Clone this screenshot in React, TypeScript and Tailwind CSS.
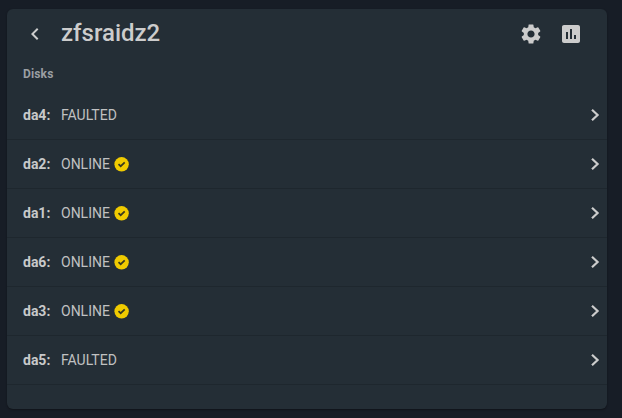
import React from 'react';
import { MdAssessment, MdChevronLeft, MdSettings } from 'react-icons/md';

interface Disk {
  name: string;
  status: 'ONLINE' | 'FAULTED';
}

const disks: Disk[] = [
  { name: 'da4', status: 'FAULTED' },
  { name: 'da2', status: 'ONLINE' },
  { name: 'da1', status: 'ONLINE' },
  { name: 'da6', status: 'ONLINE' },
  { name: 'da3', status: 'ONLINE' },
  { name: 'da5', status: 'FAULTED' },
];

function HealthyIcon() {
  return (
    <svg className="ml-1 h-[15px] w-[15px] text-[#f0cb00]" viewBox="0 0 15 15" fill="none">
      <circle cx="7.6" cy="7.3" r="7.2" fill="currentColor" />
      <path d="M4.5 7.1l2.2 2.1 4-3.9" stroke="#37391f" strokeWidth="1.7" />
    </svg>
  );
}

function ChevronIcon() {
  return (
    <svg className="h-6 w-6" viewBox="0 0 24 24" fill="none" stroke="currentColor">
      <path d="M9 6.7L14.6 12 9 17.3" strokeWidth="2.2" />
    </svg>
  );
}

function DiskRow({ disk }: { disk: Disk }) {
  return (
    <li className="flex h-[49px] items-center border-b border-[#1e272e] pl-4 text-sm">
      <span className="w-[38px] font-bold text-[#c8c9ca]">{disk.name}:</span>
      <span className="text-[#c0c1c2]">{disk.status}</span>
      {disk.status === 'ONLINE' && <HealthyIcon />}
      <button className="ml-auto">
        <ChevronIcon />
      </button>
    </li>
  );
}

export default function App() {
  return (
    <div className="h-[418px] w-[622px] bg-[#171d26] pt-[9px] pl-[7px] font-['Roboto',sans-serif] text-[#cccccc]">
      <div className="h-[400px] w-[600px] overflow-hidden rounded-md bg-[#242e36] shadow-[0_1px_2px_rgba(0,0,0,0.35)]">
        <header className="flex h-[50px] items-center pr-6 pl-4">
          <button className="flex w-6 justify-center">
            <MdChevronLeft size={24} />
          </button>
          <h3 className="ml-[14px] pb-0.5 text-2xl font-medium">zfsraidz2</h3>
          <div className="ml-auto flex gap-4">
            <button>
              <MdSettings size={24} />
            </button>
            <button>
              <MdAssessment size={24} />
            </button>
          </div>
        </header>

        <div className="flex h-8 items-center pb-0.5 pl-4 text-xs font-bold tracking-[0.15px] text-[#9b9fa3]">
          Disks
        </div>

        <ul>
          {disks.map((disk) => (
            <DiskRow key={disk.name} disk={disk} />
          ))}
        </ul>
      </div>
    </div>
  );
}
